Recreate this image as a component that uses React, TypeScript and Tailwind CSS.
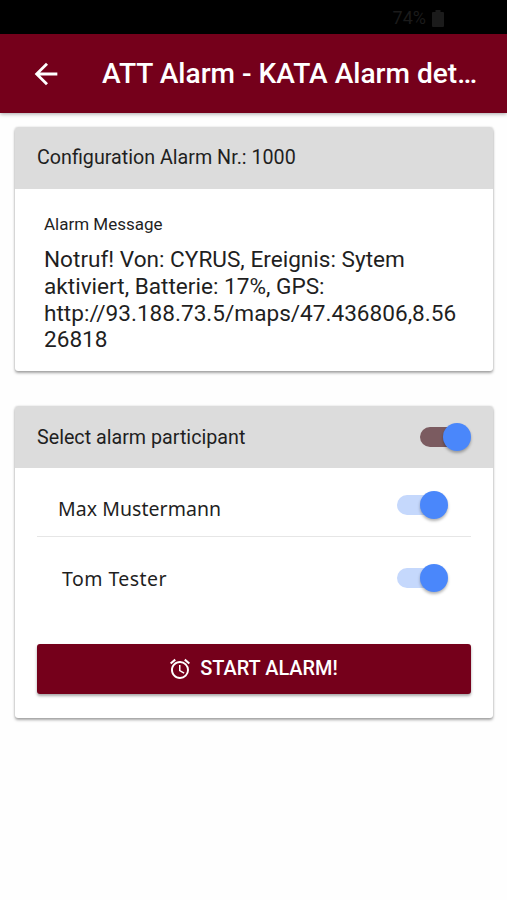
import clsx from 'clsx';
import {MdAccessAlarm, MdArrowBack} from 'react-icons/md';

type ToggleProps = {
  label: string;
  dark?: boolean;
};

function Toggle({label, dark}: ToggleProps) {
  return (
    <button
      type="button"
      role="switch"
      aria-checked="true"
      aria-label={label}
      className="relative flex h-7 w-[51px] shrink-0 items-center"
    >
      <span
        className={clsx('h-5 w-11 rounded-full', dark ? 'bg-[#7b5b60]' : 'bg-[#c5d8fc]')}
      />
      <span className="absolute right-0 top-0 size-7 rounded-full bg-[#4a87fb] shadow-[0_2px_3px_rgba(0,0,0,0.3)]" />
    </button>
  );
}

function IconBattery() {
  return (
    <svg width="12" height="17" viewBox="0 0 12 17" fill="currentColor" aria-hidden="true">
      <path d="M3.5 0h5v2H11a1 1 0 0 1 1 1v13a1 1 0 0 1-1 1H1a1 1 0 0 1-1-1V3a1 1 0 0 1 1-1h2.500Z" />
    </svg>
  );
}

function StatusBar() {
  return (
    <div className="flex h-[34px] items-center justify-end gap-1.5 bg-black pr-[63px] pt-0.5 text-[#1b1b1b]">
      <span className="text-[18px] leading-none">74%</span>
      <IconBattery />
    </div>
  );
}

function Header() {
  return (
    <header className="relative flex h-[79px] items-center bg-[#75001b] pl-[29px] text-white shadow-[0_1px_4px_rgba(0,0,0,0.35)]">
      <MdArrowBack size={34} className="shrink-0" />
      <h1 className="ml-[39px] whitespace-nowrap pt-px text-[28.1px] font-medium leading-9">
        ATT Alarm - KATA Alarm det…
      </h1>
    </header>
  );
}

const card = 'rounded-[3px] bg-white shadow-[0_2px_3px_rgba(0,0,0,0.35),0_0_2px_rgba(0,0,0,0.15)]';

export default function App() {
  return (
    <div className="h-[900px] w-[507px] overflow-hidden bg-[#fefefe] font-['Roboto',sans-serif] text-[#1f1f1f]">
      <StatusBar />
      <Header />

      <main className="pl-[15px] pr-[14px] pt-[14px]">
        <section className={card}>
          <h2 className="flex h-[62px] items-center rounded-t-[3px] bg-[#dcdcdc] px-[22px] text-[19.7px]">
            Configuration Alarm Nr.: 1000
          </h2>
          <div className="h-[182px] px-[29px] pt-[25px]">
            <p className="text-[17px] leading-5">Alarm Message</p>
            <p className="mt-[13px] w-[420px] break-all text-[22.6px] leading-[26.8px]">
              Notruf! Von: CYRUS, Ereignis: Sytem
              <br />
              aktiviert, Batterie: 17%, GPS:
              <br />
              http://93.188.73.5/maps/47.436806,8.5626818
            </p>
          </div>
        </section>

        <section className={clsx(card, 'mt-[35px] h-[312px]')}>
          <div className="flex h-[62px] items-center justify-between rounded-t-[3px] bg-[#dcdcdc] px-[22px]">
            <h2 className="pt-0.5 text-[19.7px]">Select alarm participant</h2>
            <Toggle label="Select all participants" dark />
          </div>

          <ul className="px-[22px] font-['Noto_Sans',sans-serif] text-[19.5px]">
            <li className="flex h-[69px] items-center justify-between border-b border-[#e6e6e6] pl-[21px] pr-[23px]">
              <span className="pt-3.5 tracking-[0.05px]">Max Mustermann</span>
              <span className="pt-1.5">
                <Toggle label="Max Mustermann" />
              </span>
            </li>
            <li className="flex h-[82px] items-center justify-between pl-[25px] pr-[23px]">
              <span className="pt-0.5 tracking-[0.45px]">Tom Tester</span>
              <Toggle label="Tom Tester" />
            </li>
          </ul>

          <div className="px-[22px] pt-[25px]">
            <button
              type="button"
              className="flex h-[50px] w-full items-center justify-center gap-2 rounded-[3px] bg-[#75001b] pr-0.5 text-[19.9px] font-medium text-white shadow-[0_2px_3px_rgba(0,0,0,0.35)]"
            >
              <MdAccessAlarm size={24} />
              START ALARM!
            </button>
          </div>
        </section>
      </main>
    </div>
  );
}
